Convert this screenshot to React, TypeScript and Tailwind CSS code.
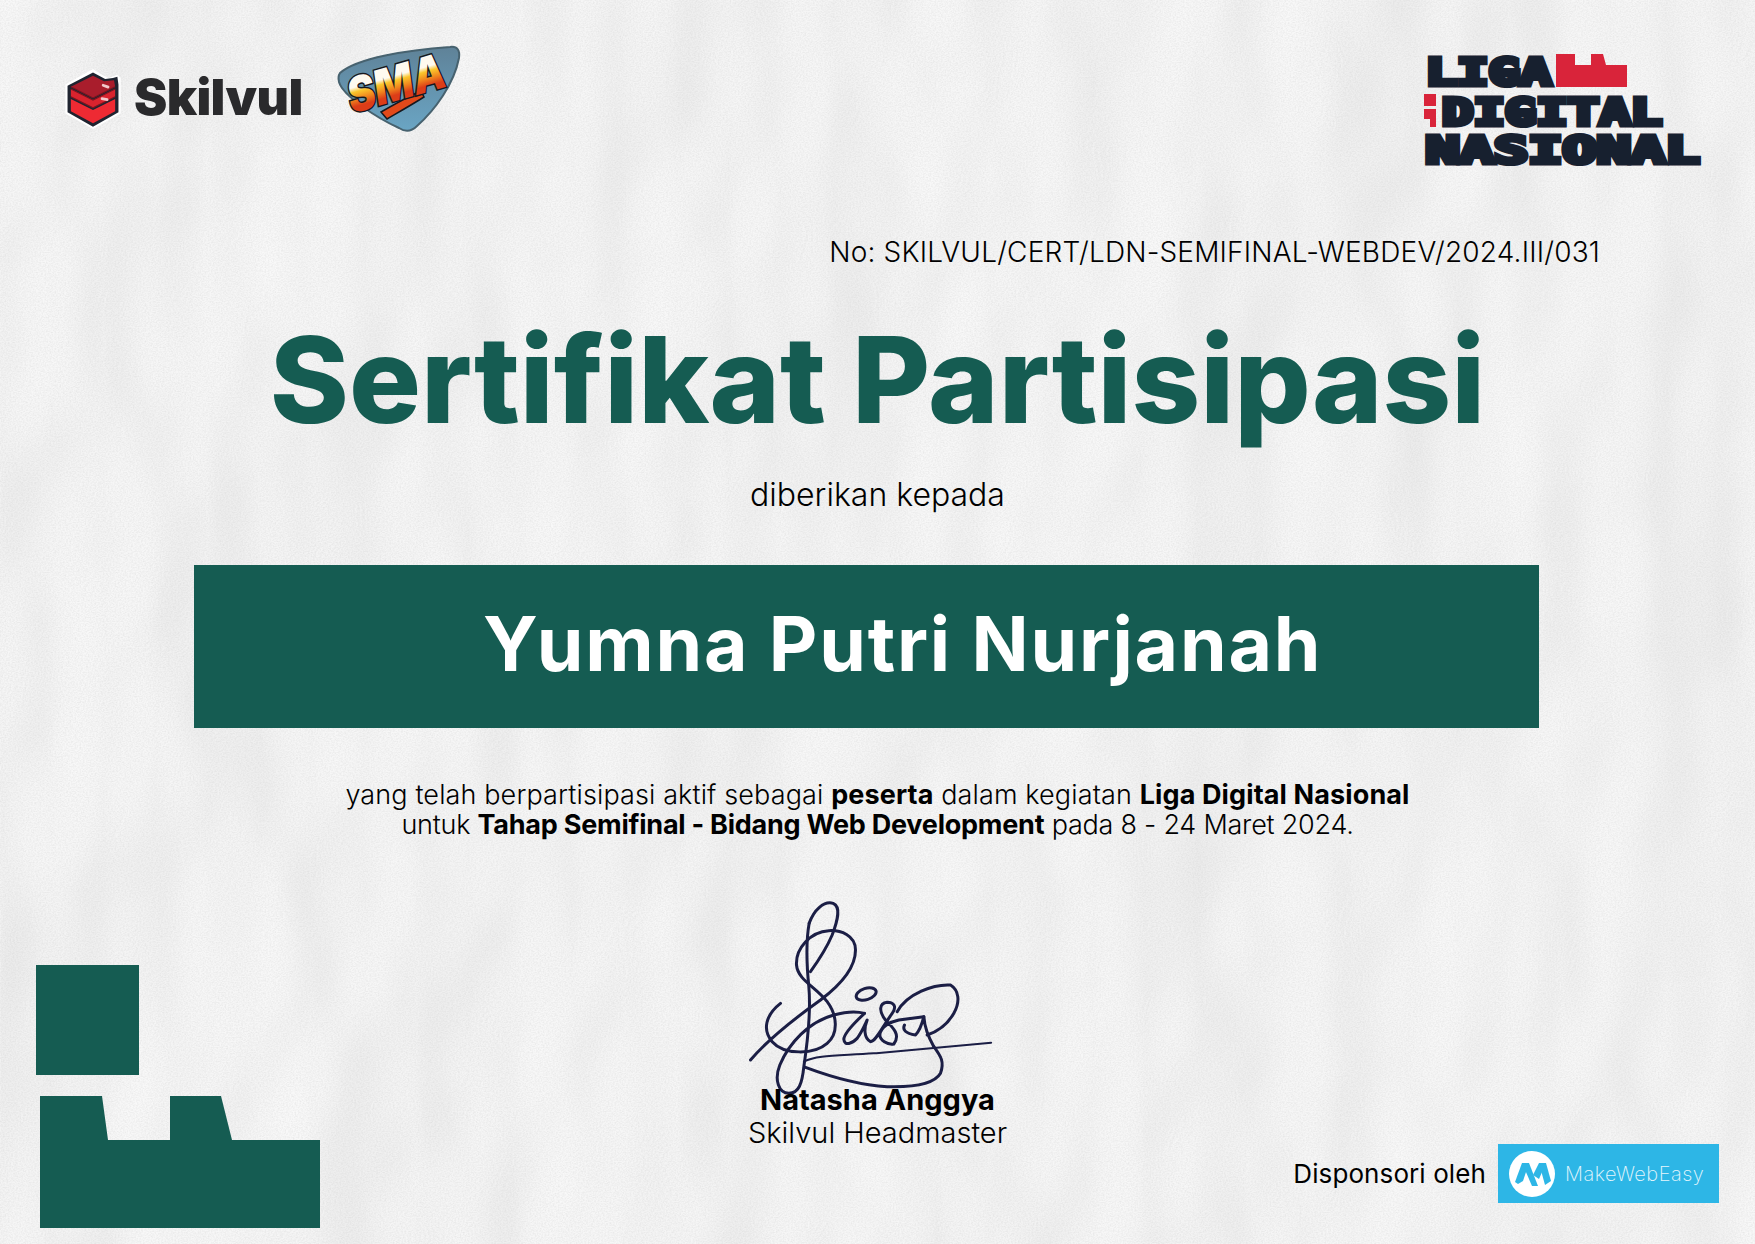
const teal = '#155c52';

function PaperBackground() {
  return (
    <svg className="absolute inset-0" width="1755" height="1244" aria-hidden="true">
      <filter id="crumple" x="0" y="0" width="100%" height="100%">
        <feTurbulence type="fractalNoise" baseFrequency="0.0048 0.0028" numOctaves="3" seed="23" result="noise" />
        <feDiffuseLighting in="noise" surfaceScale="13" diffuseConstant="1.05" lightingColor="#f5f5f5">
          <feDistantLight azimuth="200" elevation="70" />
        </feDiffuseLighting>
      </filter>
      <filter id="weave" x="0" y="0" width="100%" height="100%">
        <feTurbulence type="fractalNoise" baseFrequency="0.6 0.8" numOctaves="2" seed="4" />
        <feColorMatrix values="0 0 0 0 0.55  0 0 0 0 0.55  0 0 0 0 0.55  0.5 0 0 0 -0.17" />
      </filter>
      <rect width="1755" height="1244" fill="#f2f2f2" filter="url(#crumple)" />
      <rect width="1755" height="1244" filter="url(#weave)" />
    </svg>
  );
}

function SkilvulLogo() {
  return (
    <div className="flex items-center gap-[10px]">
      <svg width="62" height="62" viewBox="0 0 56 56">
        <path d="M28 1 L36 6 L42 9 L50 6 L53 9 L53 41 L28 55 L3 41 L3 15 Z" fill="#fff" />
        <path d="M28 4 L39 10 L46 9 L50 8 L51 15 L51 40 L28 53 L5 40 L5 16 Z" fill="#1f2430" />
        <path d="M28 7 L38 12 L47 11 L48 17 L28 27 L8 17 Z" fill="#a91d2c" />
        <path d="M8 19 L28 29 L48 19 L48 26 L28 36 L8 26 Z" fill="#d9232e" />
        <path d="M8 28 L28 38 L48 28 L48 39 L28 50 L8 39 Z" fill="#ee2a33" />
        <path d="M8 17 L28 27 L48 17 M8 26 L28 36 L48 26 M8 19 L28 29 L48 19" stroke="#7c1520" strokeWidth="1" fill="none" />
        <rect x="36" y="15" width="7" height="2.5" rx="1" fill="#f3c9cc" transform="rotate(20 39 16)" />
        <rect x="35" y="27" width="7" height="2.5" rx="1" fill="#f3c9cc" transform="rotate(10 39 28)" />
      </svg>
      <span className="-mt-[4px] text-[50px] leading-none font-black tracking-[-0.6px] text-[#2a2a2c] [font-family:Inter,sans-serif]">Skilvul</span>
    </div>
  );
}

function SmaLogo() {
  return (
    <svg width="124" height="88" viewBox="0 0 124 88" className="overflow-visible">
      <defs>
        <linearGradient id="pick" x1="0" y1="0" x2="0" y2="1">
          <stop offset="0" stopColor="#5f8298" />
          <stop offset="1" stopColor="#6aa5c4" />
        </linearGradient>
        <linearGradient id="paint" x1="0" y1="0" x2="0" y2="1">
          <stop offset="0.38" stopColor="#fffaf0" />
          <stop offset="0.46" stopColor="#fbc62c" />
          <stop offset="0.58" stopColor="#f0861e" />
          <stop offset="0.7" stopColor="#dc3d18" />
        </linearGradient>
      </defs>
      <path d="M3 29 C20 14 70 6 113 3 C121 2 123 7 122 14 C117 40 98 66 80 82 C74 88 68 88 62 84 C40 74 6 52 2 38 C1 34 1 32 3 29 Z" fill="url(#pick)" stroke="#47626f" strokeWidth="2" />
      <path d="M44 68 C58 60 72 52 84 47 L87 53 C76 60 62 68 50 75 Z" fill="#e2491a" stroke="#15181f" strokeWidth="1.5" />
      <g transform="rotate(-16 60 40)">
        <text x="9" y="56" fontSize="48" fontWeight="900" fontStyle="italic" fontFamily="Inter, sans-serif" fill="url(#paint)" stroke="#15181f" strokeWidth="3" paintOrder="stroke" textLength="100" lengthAdjust="spacingAndGlyphs">SMA</text>
      </g>
    </svg>
  );
}

function LigaLogo() {
  const letters = { fontFamily: 'DejaVu Sans Mono, monospace', fontWeight: 700, fontSize: 38, fill: '#17202f', stroke: '#17202f', strokeWidth: 5, strokeLinejoin: 'miter' as const };
  return (
    <svg width="278" height="112" viewBox="0 0 278 112" className="overflow-visible">
      <text x="2.5" y="30.5" textLength="126" lengthAdjust="spacingAndGlyphs" {...letters}>LIGA</text>
      <path d="M133 0 H152 V11 H168 V0 H180 L183 11 H204 V33 H133 Z" fill="#d9243a" />
      <path d="M1 40 H13 V52 H1 Z M1 55 H13 V73 H7 V65 H1 Z" fill="#d9243a" />
      <text x="19" y="70.5" textLength="220" lengthAdjust="spacingAndGlyphs" {...letters}>DIGITAL</text>
      <text x="2.5" y="109" textLength="274" lengthAdjust="spacingAndGlyphs" {...letters}>NASIONAL</text>
    </svg>
  );
}

function Signature() {
  return (
    <svg width="300" height="220" viewBox="22.5 0 900 660" fill="none" stroke="#1b1e45" strokeWidth="9" strokeLinecap="round" strokeLinejoin="round" className="block">
      <path d="M90 540 C150 470 230 410 300 360 C360 315 405 265 405 210 C405 165 360 150 325 152 C270 155 225 205 228 255 C232 300 285 320 320 365 C350 405 355 460 320 490 C280 525 190 525 155 485 C125 450 135 405 180 370" />
      <path d="M266 130 C280 90 310 62 338 70 C362 80 352 120 335 165 C318 205 295 240 270 275" />
      <path d="M266 130 C255 190 258 250 265 320 C272 400 262 480 250 560 C245 610 235 640 205 640 C175 640 160 600 178 555 C205 490 265 425 340 405 C365 398 405 392 432 400" />
      <path d="M250 545 C290 525 350 528 460 520 C580 510 700 498 812 488" strokeWidth="6" />
      <path d="M255 562 C330 590 410 615 500 620 C570 622 640 615 660 580 C672 545 662 530 640 500" />
      <path d="M432 400 C400 430 370 460 370 478 C372 500 395 490 410 475 C425 455 435 430 440 420 C430 445 430 475 450 485 C465 485 480 450 515 400 C530 380 520 367 500 367 C475 370 475 395 495 420 C520 445 540 465 520 492 C500 495 478 480 478 465 C480 440 510 425 535 420 L610 410" />
      <path d="M552 435 C545 450 555 460 585 465 C600 450 605 430 610 410 C612 440 620 465 640 500" />
      <path d="M530 395 C560 340 640 312 690 315 C715 330 720 365 700 400 C680 435 650 455 620 465" />
      <ellipse cx="437" cy="342" rx="31" ry="17" transform="rotate(-18 437 342)" />
    </svg>
  );
}

function MakeWebEasy() {
  return (
    <div className="flex h-[59px] w-[221px] items-center gap-[10px] bg-[#2db6e6] pl-[11px]">
      <svg width="46" height="46" viewBox="0 0 46 46" className="shrink-0">
        <circle cx="23" cy="23" r="23" fill="#fff" />
        <path d="M6 31 L13 12 H20 L14 30 L9 33 Z" fill="#2db6e6" />
        <path d="M13 12 H20 L29 35 H23 Z" fill="#2db6e6" />
        <path d="M24 24 L30 12 H37 L30 28 Z" fill="#2db6e6" />
        <path d="M30 12 H37 L42 30 L36 34 Z" fill="#2db6e6" />
      </svg>
      <span className="text-[20px] leading-none font-extralight tracking-[0.5px] text-[#e6f7fd] [font-family:Inter,sans-serif]">MakeWebEasy</span>
    </div>
  );
}

function Decoration() {
  return (
    <div className="flex flex-col items-start pl-[36px]">
      <div className="h-[110px] w-[103px] bg-[#155c52]" />
      <svg width="280" height="132" viewBox="0 0 280 132" className="mt-[21px] ml-[4px] block">
        <path d="M0 0 H62 L68 44 H130 V0 H181 L192 44 H280 V132 H0 Z" fill={teal} />
      </svg>
    </div>
  );
}

export default function App() {
  return (
    <div className="relative h-[1244px] w-[1755px] overflow-hidden bg-[#f0f0f0] text-black [font-family:Inter,sans-serif]">
      <PaperBackground />
      <div className="relative flex h-full flex-col">
        {/* Header logos */}
        <div className="flex items-start justify-between pt-[46px] pr-[54px] pl-[62px]">
          <div className="flex items-start gap-[34px]">
            <div className="pt-[22px]"><SkilvulLogo /></div>
            <div className="-mt-[2px]"><SmaLogo /></div>
          </div>
          <div className="pt-[8px]"><LigaLogo /></div>
        </div>

        <p className="mt-[68px] pr-[155px] text-right text-[28px] leading-[36px] font-light tracking-[0.18px]">No: SKILVUL/CERT/LDN-SEMIFINAL-WEBDEV/2024.III/031</p>

        <h1 className="mt-[35px] text-center text-[120px] leading-[150px] font-extrabold text-[#155c52]">Sertifikat Partisipasi</h1>

        <p className="mt-[22px] text-center text-[32px] leading-[36px] font-light">diberikan kepada</p>

        {/* Name band */}
        <div className="mt-[52px] mr-[216px] ml-[194px] flex h-[163px] items-center bg-[#155c52] pb-[6px] pl-[289px]">
          <span className="text-[75px] leading-none font-bold tracking-[1.8px] text-white">Yumna Putri Nurjanah</span>
        </div>

        <div className="mt-[52px] text-center text-[27px] leading-[30px] font-light">
          <p className="tracking-[0.12px]">yang telah berpartisipasi aktif sebagai <b className="font-bold">peserta</b> dalam kegiatan <b className="font-bold">Liga Digital Nasional</b></p>
          <p className="tracking-[-0.24px]">untuk <b className="font-bold">Tahap Semifinal - Bidang Web Development</b> pada 8 - 24 Maret 2024.</p>
        </div>

        {/* Footer row */}
        <div className="mt-auto grid grid-cols-[1fr_auto_1fr] items-end pb-[16px]">
          <Decoration />
          <div className="flex flex-col items-center pb-[79px]">
            <Signature />
            <p className="-mt-[17px] text-[29px] leading-[34px] font-bold">Natasha Anggya</p>
            <p className="text-[29px] leading-[32px] font-light">Skilvul Headmaster</p>
          </div>
          <div className="flex items-center justify-end gap-[12px] pr-[36px] pb-[25px]">
            <span className="text-[26px] leading-none font-normal tracking-[0.1px]">Disponsori oleh</span>
            <MakeWebEasy />
          </div>
        </div>
      </div>
    </div>
  );
}
